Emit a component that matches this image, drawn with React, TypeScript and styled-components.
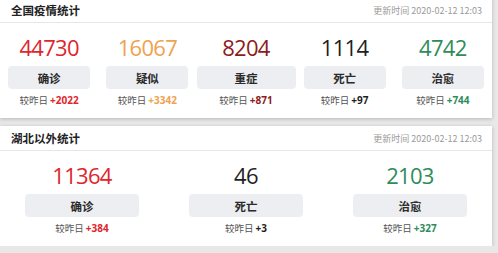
import React from "react";
import styled, { createGlobalStyle } from "styled-components";

type Stat = { label: string; value: string; diff: string; color: string; wide?: boolean };

const national: Stat[] = [
  { label: "确诊", value: "44730", diff: "+2022", color: "#e0252d" },
  { label: "疑似", value: "16067", diff: "+3342", color: "#f0a24f" },
  { label: "重症", value: "8204", diff: "+871", color: "#8c1c22", wide: true },
  { label: "死亡", value: "1114", diff: "+97", color: "#1f1f1f" },
  { label: "治愈", value: "4742", diff: "+744", color: "#2f8c5a" },
];

const outside: Stat[] = [
  { label: "确诊", value: "11364", diff: "+384", color: "#e0252d" },
  { label: "死亡", value: "46", diff: "+3", color: "#1f1f1f" },
  { label: "治愈", value: "2103", diff: "+327", color: "#2f8c5a" },
];

const GlobalStyle = createGlobalStyle`
  body {
    margin: 0;
    background: #e8e8e8;
    font-family: "Open Sans", "Noto Sans CJK SC", sans-serif;
  }
`;

const Page = styled.div`
  display: flex;
  flex-direction: column;
  gap: 8px;
  width: 492px;
  margin-top: -2px;
`;

const Card = styled.section`
  background: #fff;
  box-shadow: 0 1px 4px rgba(0, 0, 0, 0.22);
  padding-bottom: 11px;
`;

const Header = styled.header`
  display: flex;
  align-items: center;
  justify-content: space-between;
  height: 24px;
  padding: 0 10px 0 11px;
  border-bottom: 1px solid #e6e6e6;
`;

const Title = styled.h2`
  margin: 0;
  font-size: 11.5px;
  font-weight: 700;
  color: #222;
  font-family: "Noto Sans CJK SC", sans-serif;
`;

const Updated = styled.span`
  font-size: 9px;
  color: #9a9a9a;
  font-family: "Noto Sans CJK SC", sans-serif;
`;

const Grid = styled.div<{ $cols: number }>`
  display: grid;
  grid-template-columns: repeat(${(p) => p.$cols}, 1fr);
  padding-top: 10px;
`;

const Column = styled.div`
  display: flex;
  flex-direction: column;
  align-items: center;
`;

const Value = styled.div<{ $color: string }>`
  font-size: 22px;
  font-weight: 400;
  line-height: 28px;
  letter-spacing: -0.7px;
  color: ${(p) => p.$color};
`;

const Label = styled.div<{ $width: number }>`
  width: ${(p) => p.$width}px;
  height: 23px;
  margin-top: 5px;
  display: flex;
  align-items: center;
  justify-content: center;
  background: #eceef1;
  border-radius: 4px;
  font-size: 11.5px;
  font-weight: 700;
  color: #2a2a2a;
  font-family: "Noto Sans CJK SC", sans-serif;
`;

const Diff = styled.div`
  margin-top: 4px;
  font-size: 9.5px;
  line-height: 14px;
  color: #555;
  font-family: "Noto Sans CJK SC", sans-serif;
`;

const DiffNum = styled.b<{ $color: string }>`
  margin-left: 2px;
  font-size: 10px;
  color: ${(p) => p.$color};
  font-family: "Open Sans", sans-serif;
`;

const StatsCard = ({ title, stats, boxWidth }: { title: string; stats: Stat[]; boxWidth: number }) => (
  <Card>
    <Header>
      <Title>{title}</Title>
      <Updated>更新时间 2020-02-12 12:03</Updated>
    </Header>
    <Grid $cols={stats.length}>
      {stats.map((s) => (
        <Column key={s.label}>
          <Value $color={s.color}>{s.value}</Value>
          <Label $width={s.wide ? 99 : boxWidth}>{s.label}</Label>
          <Diff>
            较昨日<DiffNum $color={s.color}>{s.diff}</DiffNum>
          </Diff>
        </Column>
      ))}
    </Grid>
  </Card>
);

export default function App() {
  return (
    <>
      <GlobalStyle />
      <Page>
        <StatsCard title="全国疫情统计" stats={national} boxWidth={82} />
        <StatsCard title="湖北以外统计" stats={outside} boxWidth={114} />
      </Page>
    </>
  );
}
